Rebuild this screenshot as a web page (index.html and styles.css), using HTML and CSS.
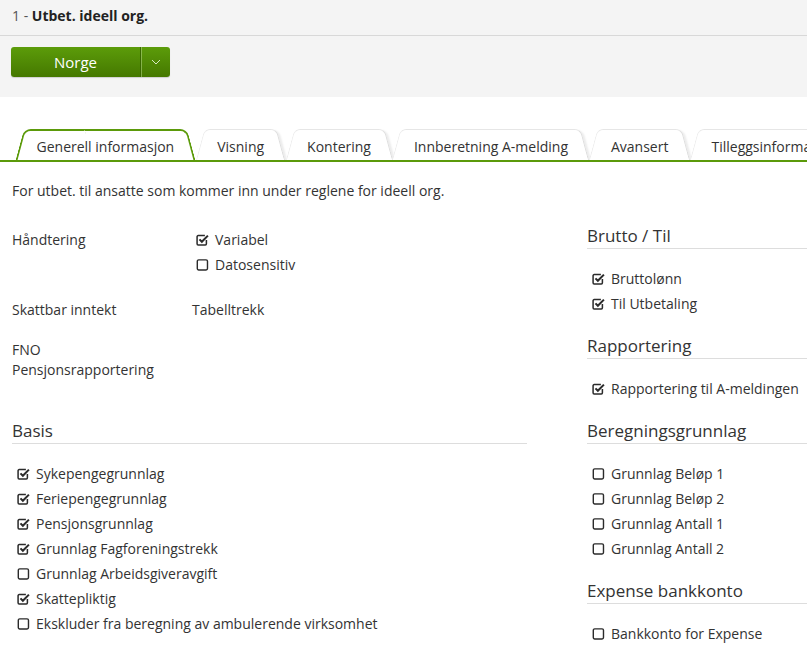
FILE: index.html
```html
<!DOCTYPE html>
<html lang="no">
<head>
<meta charset="utf-8">
<title>Utbet. ideell org.</title>
<link rel="stylesheet" href="styles.css">
</head>
<body>
<svg width="0" height="0" class="defs" aria-hidden="true">
  <defs>
    <symbol id="cb-on" viewBox="0 0 12 12">
      <path d="M9.6 6.4V10a1 1 0 0 1-1 1H2a1 1 0 0 1-1-1V3.4a1 1 0 0 1 1-1h6.2" fill="none" stroke="#2b2b2b" stroke-width="1.4"/>
      <path d="M3.2 5.9l2.2 2.2L11 2.4" fill="none" stroke="#2b2b2b" stroke-width="1.9"/>
    </symbol>
    <symbol id="cb-off" viewBox="0 0 12 12">
      <rect x="1.2" y="1.7" width="9.4" height="9.4" rx="1.3" fill="none" stroke="#2b2b2b" stroke-width="1.3"/>
    </symbol>
  </defs>
</svg>

<header class="top">
  <div class="title-bar">
    <span class="num">1 - </span><span class="name">Utbet. ideell org.</span>
  </div>
  <div class="btn-row">
    <div class="btn-group">
      <span class="btn-main">Norge</span>
      <span class="btn-caret">
        <svg width="10" height="6" viewBox="0 0 10 6"><path d="M1 1l4 4 4-4" fill="none" stroke="#d7e8c4" stroke-width="1"/></svg>
      </span>
    </div>
  </div>
</header>

<nav class="tabs">
  <ul class="tab-list">
    <li class="tab active">Generell informasjon</li>
    <li class="tab">Visning</li>
    <li class="tab">Kontering</li>
    <li class="tab">Innberetning A-melding</li>
    <li class="tab">Avansert</li>
    <li class="tab">Tilleggsinformasjon</li>
  </ul>
</nav>

<main class="content">
  <p class="intro">For utbet. til ansatte som kommer inn under reglene for ideell org.</p>

  <div class="columns">
    <section class="col-left">
      <div class="form-row row-1">
        <div class="label">Håndtering</div>
        <ul class="checks value-checks">
          <li><svg class="cb"><use href="#cb-on"/></svg>Variabel</li>
          <li><svg class="cb"><use href="#cb-off"/></svg>Datosensitiv</li>
        </ul>
      </div>
      <div class="form-row row-2">
        <div class="label">Skattbar inntekt</div>
        <div class="value">Tabelltrekk</div>
      </div>
      <div class="form-row row-3">
        <div class="label">FNO<br>Pensjonsrapportering</div>
        <div class="value"></div>
      </div>

      <h2 class="group-title basis">Basis</h2>
      <ul class="checks">
        <li><svg class="cb"><use href="#cb-on"/></svg>Sykepengegrunnlag</li>
        <li><svg class="cb"><use href="#cb-on"/></svg>Feriepengegrunnlag</li>
        <li><svg class="cb"><use href="#cb-on"/></svg>Pensjonsgrunnlag</li>
        <li><svg class="cb"><use href="#cb-on"/></svg>Grunnlag Fagforeningstrekk</li>
        <li><svg class="cb"><use href="#cb-off"/></svg>Grunnlag Arbeidsgiveravgift</li>
        <li><svg class="cb"><use href="#cb-on"/></svg>Skattepliktig</li>
        <li><svg class="cb"><use href="#cb-off"/></svg>Ekskluder fra beregning av ambulerende virksomhet</li>
      </ul>
    </section>

    <section class="col-right">
      <h2 class="group-title first">Brutto / Til</h2>
      <ul class="checks">
        <li><svg class="cb"><use href="#cb-on"/></svg>Bruttolønn</li>
        <li><svg class="cb"><use href="#cb-on"/></svg>Til Utbetaling</li>
      </ul>

      <h2 class="group-title">Rapportering</h2>
      <ul class="checks">
        <li><svg class="cb"><use href="#cb-on"/></svg>Rapportering til A-meldingen</li>
      </ul>

      <h2 class="group-title">Beregningsgrunnlag</h2>
      <ul class="checks">
        <li><svg class="cb"><use href="#cb-off"/></svg>Grunnlag Beløp 1</li>
        <li><svg class="cb"><use href="#cb-off"/></svg>Grunnlag Beløp 2</li>
        <li><svg class="cb"><use href="#cb-off"/></svg>Grunnlag Antall 1</li>
        <li><svg class="cb"><use href="#cb-off"/></svg>Grunnlag Antall 2</li>
      </ul>

      <h2 class="group-title">Expense bankkonto</h2>
      <ul class="checks">
        <li><svg class="cb"><use href="#cb-off"/></svg>Bankkonto for Expense</li>
      </ul>
    </section>
  </div>
</main>
</body>
</html>
```

FILE: styles.css
```css
html, body {
  margin: 0;
  padding: 0;
  overflow: hidden;
  background: #fff;
}

body {
  font-family: "Open Sans", "Liberation Sans", sans-serif;
  font-size: 14px;
  line-height: 20px;
  color: #333;
  width: 807px;
  height: 655px;
}

.defs {
  position: absolute;
  width: 0;
  height: 0;
}

/* Header */
.top {
  background: #f4f4f4;
  height: 97px;
  box-sizing: border-box;
}

.title-bar {
  height: 36px;
  box-sizing: border-box;
  padding: 6px 12px 0;
  border-bottom: 1px solid #d8d8d8;
  font-size: 14px;
}

.title-bar .num {
  color: #555;
}

.title-bar .name {
  font-weight: 700;
  color: #222;
}

.btn-row {
  padding: 11px 11px 0;
}

.btn-group {
  display: inline-flex;
  height: 30px;
  border-radius: 3px;
  background: linear-gradient(#5c9c0a, #457800);
  box-shadow: 0 1px 1px rgba(0, 0, 0, 0.15);
  color: #fff;
}

.btn-main {
  width: 129px;
  text-align: center;
  line-height: 30px;
  font-size: 15px;
}

.btn-caret {
  width: 29px;
  display: flex;
  align-items: center;
  justify-content: center;
  border-left: 1px solid #3a6800;
  box-shadow: inset 1px 0 0 rgba(200, 230, 160, 0.45);
}

/* Tabs */
.tabs {
  margin-top: 32px;
  overflow: hidden;
  border-bottom: 2px solid #5b9a0a;
}

.tab-list {
  display: flex;
  list-style: none;
  margin: 0;
  padding: 0 0 0 15px;
  white-space: nowrap;
}

.tab {
  position: relative;
  z-index: 0;
  padding: 8px 21.5px 3px;
  font-size: 14px;
  color: #333;
}

.tab::before,
.tab::after {
  content: "";
  position: absolute;
  top: 0;
  bottom: 0;
  width: 56%;
  z-index: -1;
  background: #fff;
  border-top: 1px solid #e6e6e6;
  transform-origin: bottom;
}

.tab::before {
  left: 0;
  border-left: 1px solid #ececec;
  border-top-left-radius: 6px;
  transform: skewX(-15deg);
  transform-origin: bottom left;
}

.tab::after {
  right: 0;
  border-right: 1px solid #dcdcdc;
  border-top-right-radius: 6px;
  transform: skewX(15deg);
  transform-origin: bottom right;
  box-shadow: 2px 1px 2px rgba(0, 0, 0, 0.08);
}

.tab.active {
  z-index: 2;
  margin-bottom: -2px;
  padding-bottom: 5px;
}

.tab.active::before,
.tab.active::after {
  border-color: #5b9a0a;
  border-top-width: 2px;
  box-shadow: none;
}

.tab.active::before {
  border-left-width: 2px;
  border-top-left-radius: 7px;
}

.tab.active::after {
  border-right-width: 2px;
  border-top-right-radius: 7px;
}

/* Content */
.content {
  padding: 0 12px;
}

.intro {
  margin: 19px 0 0;
}

.columns {
  display: flex;
  margin-top: 24px;
}

.col-left {
  width: 515px;
  flex: none;
  padding-top: 2px;
}

.col-right {
  width: 250px;
  flex: none;
  margin-left: 60px;
  margin-top: -1px;
}

.form-row {
  display: flex;
}

.form-row .label {
  width: 180px;
  flex: none;
}

.row-1 .label {
  line-height: 25px;
}

.row-2 {
  margin-top: 20px;
  line-height: 25px;
}

.row-3 {
  margin-top: 18px;
}

.checks {
  list-style: none;
  margin: 0;
  padding: 0 0 0 5px;
}

.checks li {
  display: flex;
  align-items: center;
  height: 25px;
  white-space: nowrap;
}

.value-checks {
  padding-left: 4px;
}

.cb {
  width: 13px;
  height: 13px;
  margin-right: 6px;
  flex: none;
}

.group-title {
  margin: 18px 0 17px;
  font-size: 17px;
  font-weight: 400;
  line-height: 24px;
  color: #333;
  border-bottom: 1px solid #dddddd;
}

.group-title.first {
  margin-top: 0;
}

.group-title.basis {
  margin-top: 39px;
}
```
